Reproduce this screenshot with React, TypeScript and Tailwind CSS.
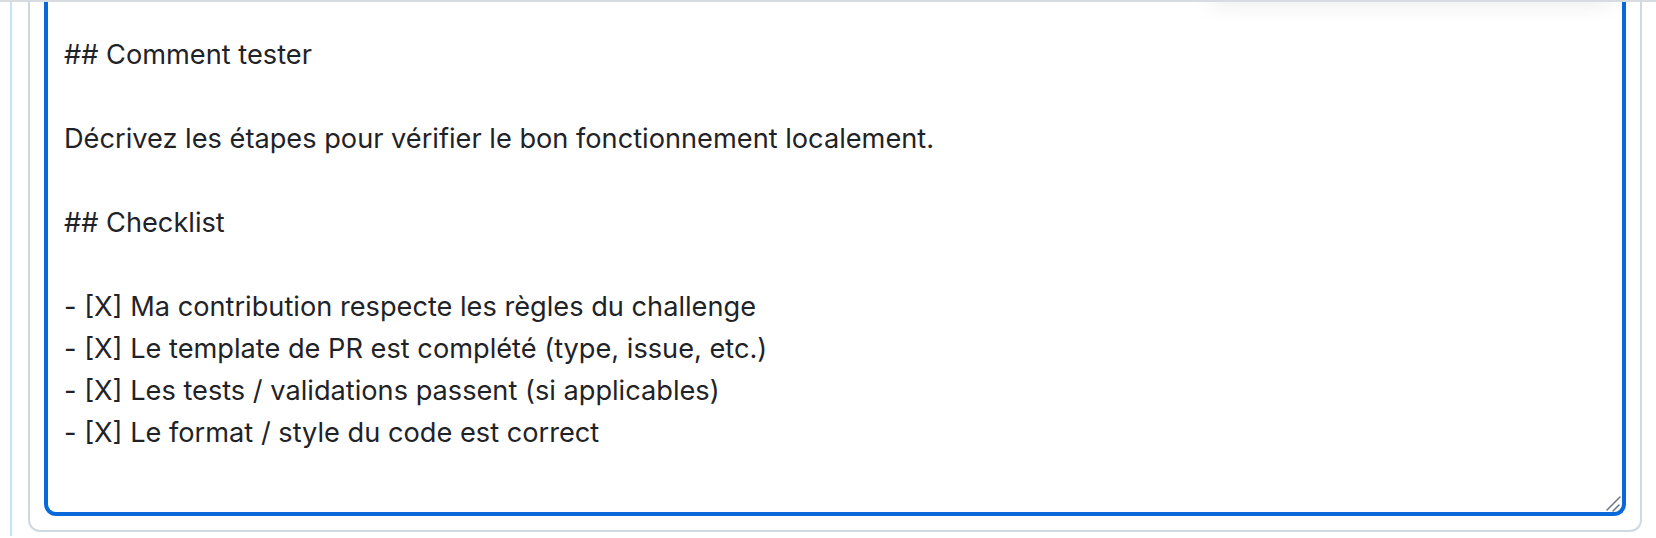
const lines = [
  '## Comment tester',
  '',
  'Décrivez les étapes pour vérifier le bon fonctionnement localement.',
  '',
  '## Checklist',
  '',
  '- [X] Ma contribution respecte les règles du challenge',
  '- [X] Le template de PR est complété (type, issue, etc.)',
  '- [X] Les tests / validations passent (si applicables)',
  '- [X] Le format / style du code est correct',
];

function ResizeHandle() {
  return (
    <svg className="absolute right-0 bottom-0" width="16" height="16" viewBox="0 0 16 16">
      <path d="M1 14 L14 1" stroke="#6e7781" strokeWidth="1.5" strokeLinecap="round" />
      <path d="M7 15 L13 9" stroke="#6e7781" strokeWidth="1.5" strokeLinecap="round" />
    </svg>
  );
}

export default function App() {
  return (
    <div className="relative h-[538px] w-[1656px] overflow-hidden bg-white font-['Inter',sans-serif]">
      <div className="flex h-full pl-[10px]">
        <div className="h-[536px] w-[2px] bg-[#c5e1fb]" />
        <div className="ml-[16px] w-[1614px] self-start rounded-b-[12px] border-2 border-t-0 border-[#d1d9e0] px-[14px] pb-[14px]">
          <div className="relative h-[516px] rounded-b-[12px] border-4 border-t-0 border-[#0969da] bg-white">
            <div className="whitespace-pre pl-[16px] pt-[34px] text-[27.2px] leading-[42px] text-[#1f2328]">
              {lines.map((line, i) => (
                <div key={i} className="h-[42px]">{line}</div>
              ))}
            </div>
            <ResizeHandle />
          </div>
        </div>
      </div>

      {/* popover edge above the viewport, only its shadow shows */}
      <div className="absolute top-[-40px] left-[1210px] h-[40px] w-[400px] bg-white shadow-[0_4px_22px_rgba(110,119,129,0.14)]" />
      <div className="absolute inset-x-0 top-0 h-[2px] bg-[#d8dce0]" />
    </div>
  );
}
